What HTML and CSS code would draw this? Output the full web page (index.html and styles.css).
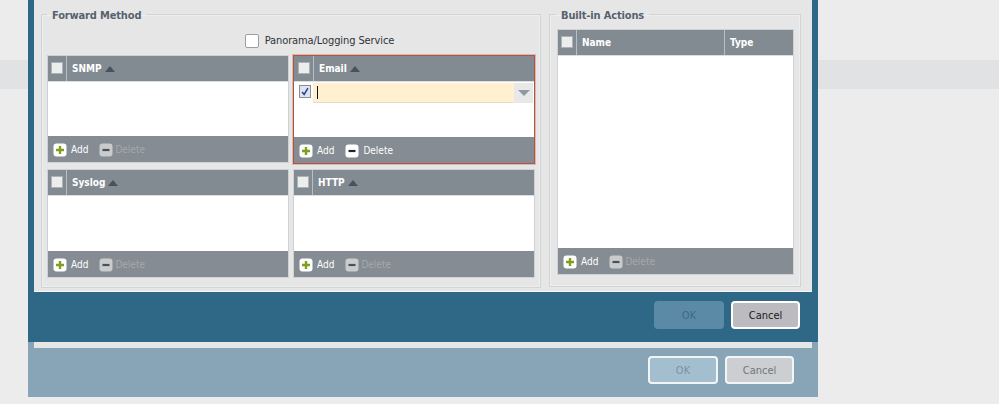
FILE: index.html
```html
<!DOCTYPE html>
<html lang="en">
<head>
<meta charset="utf-8">
<title>Forward Method</title>
<link rel="stylesheet" href="styles.css">
</head>
<body>
<div class="stage">
  <div class="band"></div>
  <div class="dialog">
    <div class="inner">
      <div class="panel">
        <fieldset class="group group-forward">
          <legend>Forward Method</legend>
          <label class="panorama"><span class="box-large"></span>Panorama/Logging Service</label>
          <div class="tables">
            <section class="table">
              <div class="thead"><span class="check-cell"><span class="check"></span></span><span class="th">SNMP<i class="sort"></i></span></div>
              <div class="tbody"></div>
              <div class="tfoot"><span class="act"><svg class="icon" viewBox="0 0 14 14"><rect x="0.5" y="0.5" width="13" height="13" rx="3" fill="#fff"/><path d="M7 3v8M3 7h8" stroke="#7f9f1c" stroke-width="2.4"/></svg>Add</span><span class="act off"><svg class="icon" viewBox="0 0 14 14"><rect x="0.5" y="0.5" width="13" height="13" rx="3" fill="#c9cbcd"/><path d="M3.5 7h7" stroke="#4c5157" stroke-width="2.2"/></svg>Delete</span></div>
            </section>
            <section class="table active">
              <div class="thead"><span class="check-cell"><span class="check"></span></span><span class="th">Email<i class="sort"></i></span></div>
              <div class="tbody">
                <div class="edit-row">
                  <span class="row-check"><svg viewBox="0 0 12 12" class="tick"><path d="M2.5 6.5l2.500 3L9.500 2" fill="none" stroke="#27408f" stroke-width="1.800"/></svg></span>
                  <span class="input"><i class="caret"></i></span>
                  <span class="drop"><i class="drop-arrow"></i></span>
                </div>
              </div>
              <div class="tfoot"><span class="act"><svg class="icon" viewBox="0 0 14 14"><rect x="0.5" y="0.5" width="13" height="13" rx="3" fill="#fff"/><path d="M7 3v8M3 7h8" stroke="#7f9f1c" stroke-width="2.4"/></svg>Add</span><span class="act"><svg class="icon" viewBox="0 0 14 14"><rect x="0.5" y="0.5" width="13" height="13" rx="3" fill="#fff"/><path d="M3.5 7h7" stroke="#23272b" stroke-width="2.2"/></svg>Delete</span></div>
            </section>
            <section class="table table-lower">
              <div class="thead"><span class="check-cell"><span class="check"></span></span><span class="th">Syslog<i class="sort"></i></span></div>
              <div class="tbody"></div>
              <div class="tfoot"><span class="act"><svg class="icon" viewBox="0 0 14 14"><rect x="0.5" y="0.5" width="13" height="13" rx="3" fill="#fff"/><path d="M7 3v8M3 7h8" stroke="#7f9f1c" stroke-width="2.4"/></svg>Add</span><span class="act off"><svg class="icon" viewBox="0 0 14 14"><rect x="0.5" y="0.5" width="13" height="13" rx="3" fill="#c9cbcd"/><path d="M3.5 7h7" stroke="#4c5157" stroke-width="2.2"/></svg>Delete</span></div>
            </section>
            <section class="table table-lower">
              <div class="thead"><span class="check-cell"><span class="check"></span></span><span class="th">HTTP<i class="sort"></i></span></div>
              <div class="tbody"></div>
              <div class="tfoot"><span class="act"><svg class="icon" viewBox="0 0 14 14"><rect x="0.5" y="0.5" width="13" height="13" rx="3" fill="#fff"/><path d="M7 3v8M3 7h8" stroke="#7f9f1c" stroke-width="2.4"/></svg>Add</span><span class="act off"><svg class="icon" viewBox="0 0 14 14"><rect x="0.5" y="0.5" width="13" height="13" rx="3" fill="#c9cbcd"/><path d="M3.5 7h7" stroke="#4c5157" stroke-width="2.2"/></svg>Delete</span></div>
            </section>
          </div>
        </fieldset>
        <fieldset class="group group-actions">
          <legend>Built-in Actions</legend>
          <section class="table table-tall">
            <div class="thead"><span class="check-cell"><span class="check"></span></span><span class="th th-name">Name</span><span class="th th-type">Type</span></div>
            <div class="tbody"></div>
            <div class="tfoot"><span class="act"><svg class="icon" viewBox="0 0 14 14"><rect x="0.5" y="0.5" width="13" height="13" rx="3" fill="#fff"/><path d="M7 3v8M3 7h8" stroke="#7f9f1c" stroke-width="2.4"/></svg>Add</span><span class="act off"><svg class="icon" viewBox="0 0 14 14"><rect x="0.5" y="0.5" width="13" height="13" rx="3" fill="#c9cbcd"/><path d="M3.5 7h7" stroke="#4c5157" stroke-width="2.2"/></svg>Delete</span></div>
          </section>
        </fieldset>
      </div>
      <div class="buttons buttons-inner">
        <button class="btn ok-dim">OK</button>
        <button class="btn cancel-live">Cancel</button>
      </div>
    </div>
    <div class="strip"></div>
    <div class="buttons buttons-outer">
      <button class="btn ok-faded">OK</button>
      <button class="btn cancel-faded">Cancel</button>
    </div>
  </div>
</div>
</body>
</html>
```
FILE: styles.css
```css
* { box-sizing: border-box; }
html, body { margin: 0; padding: 0; }
body { font-family: "DejaVu Sans", "Open Sans", sans-serif; font-stretch: condensed; font-size: 11px; background: #ececec; }
.stage { position: relative; width: 999px; height: 404px; overflow: hidden; background: #ececec; }
.band { margin-top: 60px; height: 29px; background: #e1e2e3; }

.dialog { position: absolute; left: 28px; top: 0; width: 790px; height: 397px; background: #88a5b8; }
.inner { height: 342px; padding: 0 6px; background: #2f6787; }
.panel { height: 292px; padding: 7px 7px 0; display: flex; gap: 8px; background: #e6e6e6; border-bottom: 1px solid #f4f6f7; }
.strip { height: 6px; margin: 0 6px; background: #e6e6e6; }

.group { margin: 0; min-width: 0; border: 1px solid #d2d3d3; box-shadow: inset 0 0 0 1px #eeeeee; }
.group legend { padding: 2px 5px 0; font-weight: 700; font-size: 11px; line-height: 13px; letter-spacing: -0.15px; color: #56626d; }
.group-forward { width: 500px; height: 281px; padding: 0 5px; }
.group-actions { width: 252px; height: 280px; padding: 0 6px 0 7px; }
.group-actions legend { margin-left: -1px; }

.panorama { display: flex; align-items: center; justify-content: center; height: 16px; margin: 11px 0 6px; padding-left: 57px; gap: 6px; color: #2f3338; line-height: 14px; letter-spacing: -0.1px; }
.box-large { width: 14px; height: 14px; background: #fff; border: 1px solid #9a9fa3; border-radius: 2px; }

.tables { display: grid; grid-template-columns: 242px 242px; column-gap: 4px; row-gap: 6px; align-items: start; }
.table { display: flex; flex-direction: column; height: 108px; background: #fff; border: 1px solid #cfd2d4; }
.table.active { height: 109px; margin-bottom: -1px; border-color: #b5533c; box-shadow: 0 0 0 1px rgba(181, 83, 60, 0.3); }
.table-lower { height: 109px; }
.table-tall { height: 246px; margin-top: 7px; }

.thead { display: flex; height: 26px; flex: none; background: #838b92; border-bottom: 1px solid #d8dee2; color: #fff; font-size: 10px; font-weight: 700; }
.check-cell { width: 19px; display: flex; justify-content: center; padding-top: 6px; border-right: 1px solid #b9bec2; }
.active .check-cell { width: 20px; }
.check { width: 12px; height: 12px; background: #eceded; border: 1px solid #aeb2b5; }
.th { display: flex; align-items: center; padding: 1px 0 0 5px; gap: 3px; line-height: 24px; }
.th-name { width: 148px; border-right: 1px solid #b9bec2; }
.th-type { flex: 1; }
.sort { width: 0; height: 0; border-left: 5px solid transparent; border-right: 5px solid transparent; border-bottom: 6px solid #46535f; }

.tbody { flex: 1; background: #fff; min-height: 0; }
.tfoot { display: flex; align-items: center; gap: 11px; height: 26px; flex: none; padding: 2px 0 0 5px; background: #858c93; color: #fff; font-size: 10px; }
.act { display: flex; align-items: center; gap: 4px; line-height: 14px; }
.act.off { gap: 2px; color: #a4a9ad; }
.icon { width: 14px; height: 14px; flex: none; }

.edit-row { display: flex; height: 20px; margin-top: 1px; align-items: stretch; }
.row-check { width: 12px; height: 13px; margin: 2px 2px 0 5px; background: #dfe3ef; border: 1px solid #8a8f94; }
.tick { display: block; width: 10px; height: 11px; }
.input { width: 201px; background: #fff0cf; border-bottom: 1px solid #e3dcc8; padding: 3px 0 0 4px; }
.caret { display: block; width: 1px; height: 13px; background: #111; }
.drop { width: 19px; background: #e8e8e8; display: flex; align-items: center; justify-content: center; }
.drop-arrow { width: 0; height: 0; border-left: 6px solid transparent; border-right: 6px solid transparent; border-top: 6px solid #8f99a3; }

.buttons { display: flex; justify-content: flex-end; gap: 7px; }
.buttons-inner { padding: 9px 12px 0 0; }
.buttons-outer { padding: 8px 24px 0 0; }
.btn { width: 70px; height: 28px; padding: 0; font: 11px "DejaVu Sans", "Open Sans", sans-serif; font-stretch: condensed; border-radius: 4px; border: 2px solid #fff; }
.cancel-live, .cancel-faded { width: 69px; }
.ok-dim { background: #5a8aa5; border-color: #5a8aa5; color: #3f6b85; }
.cancel-live { background: #bcbcc0; color: #1a1a1a; }
.ok-faded { background: #a3bfcf; border-color: #f2f5f6; color: #7b929f; }
.cancel-faded { background: #ccced1; border-color: #f2f5f6; color: #70777d; }
```
